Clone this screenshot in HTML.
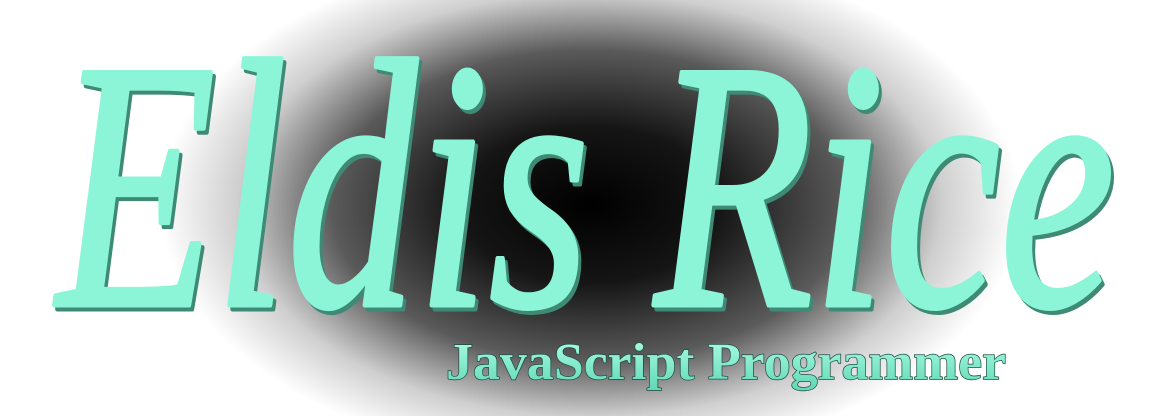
<!DOCTYPE html>
<html><head><meta charset="utf-8"><style>
html,body{margin:0;padding:0;width:1168px;height:416px;overflow:hidden;background:#fff}
</style></head><body>
<svg width="1168" height="416" viewBox="0 0 1168 416" xmlns="http://www.w3.org/2000/svg">
<defs>
<radialGradient id="bg" cx="590" cy="205" r="430" gradientUnits="userSpaceOnUse" gradientTransform="translate(590 205) scale(1 0.6) translate(-590 -205)">
<stop offset="0" stop-color="#000"/>
<stop offset="0.3" stop-color="#151515"/>
<stop offset="0.6" stop-color="#5a5a5a"/>
<stop offset="0.82" stop-color="#cfcfcf"/>
<stop offset="1" stop-color="#fff"/>
</radialGradient>
<linearGradient id="sub" x1="0" y1="0" x2="0" y2="1">
<stop offset="0" stop-color="#b0ffe8"/><stop offset="1" stop-color="#5fd8b4"/>
</linearGradient>
</defs>
<rect width="1168" height="416" fill="url(#bg)"/>
<g font-family="Liberation Serif, serif" font-style="italic" font-size="355">
<text x="60" y="309" textLength="1058" lengthAdjust="spacingAndGlyphs" fill="#3e8a74" stroke="#3e8a74" stroke-width="5" stroke-linejoin="round">Eldis Rice</text>
<text x="57" y="305" textLength="1058" lengthAdjust="spacingAndGlyphs" fill="#8cf5d8" stroke="#8cf5d8" stroke-width="5" stroke-linejoin="round">Eldis Rice</text>
</g>
<text x="446" y="379" textLength="560" lengthAdjust="spacingAndGlyphs" font-family="Liberation Serif, serif" font-weight="bold" font-size="52" fill="url(#sub)" stroke="#1f4a3e" stroke-width="1.4" paint-order="stroke">JavaScript Programmer</text>
</svg>
</body></html>
